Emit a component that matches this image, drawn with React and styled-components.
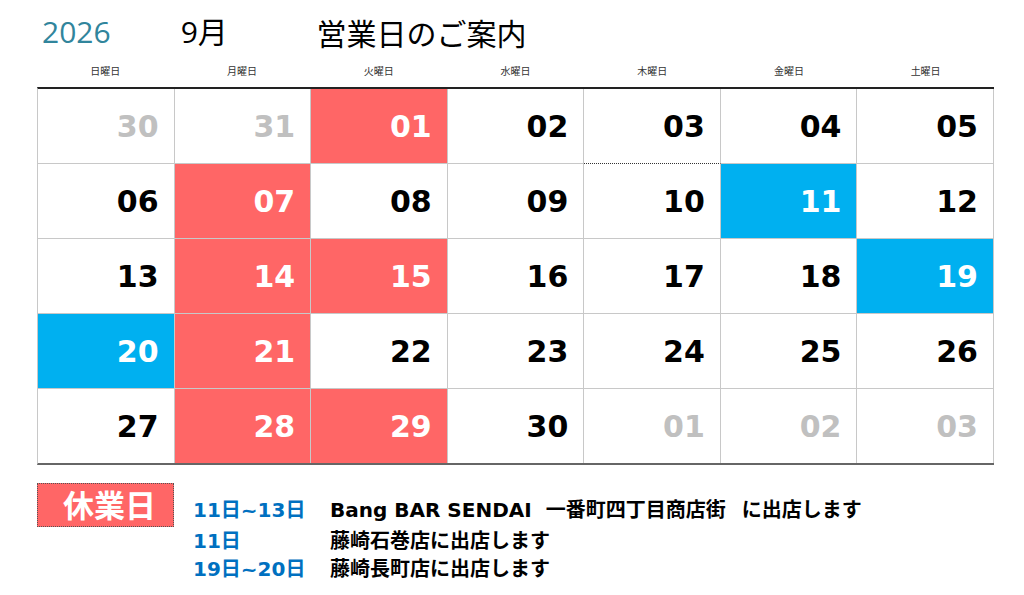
import React from "react";
import styled, { createGlobalStyle } from "styled-components";

const Global = createGlobalStyle`
  html, body { margin: 0; padding: 0; background: #fff; }
  body { font-family: "Noto Sans CJK JP", sans-serif; }
`;

const RED = "#ff6666";
const BLUE = "#00b0f0";

const Page = styled.div`
  width: 957px;
  padding: 10px 0 0 37px;
`;

const Cols = styled.div`
  display: grid;
  grid-template-columns: repeat(7, 1fr);
`;

const TitleRow = styled(Cols)`
  height: 44px;
  align-items: center;
`;

const TitleText = styled.div`
  grid-column: ${(p) => p.$span || "auto"};
  padding-left: ${(p) => p.$pad}px;
  font-family: ${(p) => (p.$latin ? '"Open Sans", ' : "")}"Noto Sans CJK JP", sans-serif;
  font-size: 30px;
  line-height: 1;
  color: ${(p) => p.$color || "#000"};
  white-space: nowrap;
`;

const WeekRow = styled(Cols)`
  height: 33px;
  align-items: center;
`;

const WeekLabel = styled.div`
  text-align: center;
  font-size: 10px;
  color: #333;
  line-height: 1;
`;

const Calendar = styled(Cols)`
  border-top: 2px solid #222;
  border-bottom: 2px solid #666;
  border-left: 1px solid #c8c8c8;
`;

const Cell = styled.div`
  box-sizing: border-box;
  display: flex;
  align-items: center;
  justify-content: flex-end;
  padding: 1px 15px 0 0;
  background: ${(p) => (p.$kind === "red" ? RED : p.$kind === "blue" ? BLUE : "#fff")};
  color: ${(p) => (p.$kind === "red" || p.$kind === "blue" ? "#fff" : p.$muted ? "#c0c0c0" : "#000")};
  border-right: 1px solid #c8c8c8;
  border-bottom: ${(p) => (p.$last ? "none" : p.$dotted ? "1px dotted #333" : "1px solid #c8c8c8")};
  height: ${(p) => (p.$last ? "74px" : "75px")};
  font-family: "DejaVu Sans", sans-serif;
  font-weight: 700;
  font-size: 30px;
  line-height: 1;
`;

const Legend = styled.div`
  display: flex;
  margin-top: 18px;
`;

const HolidayBox = styled.div`
  width: 137px;
  height: 44px;
  box-sizing: border-box;
  background: ${RED};
  border: 1px dotted #555;
  color: #fff;
  font-family: "Noto Sans CJK JP", sans-serif;
  font-weight: 700;
  font-size: 31px;
  line-height: 40px;
  padding-left: 25px;
  white-space: nowrap;
`;

const Lines = styled.div`
  margin: 13px 0 0 19px;
  display: grid;
  grid-template-columns: 137px auto;
  font-family: "DejaVu Sans", "Noto Sans CJK JP", sans-serif;
  font-weight: 700;
  font-size: 20px;
  line-height: 28px;
`;

const DateText = styled.div`
  color: #0070c0;
  white-space: nowrap;
  margin-bottom: ${(p) => (p.$first ? 3 : 0)}px;
`;

const Desc = styled.div`
  color: #000;
  white-space: nowrap;
  margin-bottom: ${(p) => (p.$first ? 3 : 0)}px;
`;

const Gap = styled.span`
  display: inline-block;
  width: ${(p) => p.$w}px;
`;

const weekdays = ["日曜日", "月曜日", "火曜日", "水曜日", "木曜日", "金曜日", "土曜日"];

const days = [
  ["30", "m"], ["31", "m"], ["01", "red"], ["02"], ["03", "dot"], ["04"], ["05"],
  ["06"], ["07", "red"], ["08"], ["09"], ["10"], ["11", "blue"], ["12"],
  ["13"], ["14", "red"], ["15", "red"], ["16"], ["17"], ["18"], ["19", "blue"],
  ["20", "blue"], ["21", "red"], ["22"], ["23"], ["24"], ["25"], ["26"],
  ["27"], ["28", "red"], ["29", "red"], ["30"], ["01", "m"], ["02", "m"], ["03", "m"],
];

export default function App() {
  return (
    <>
      <Global />
      <Page>
        <TitleRow>
          <TitleText $pad={5} $latin $color="#31859c">2026</TitleText>
          <TitleText $pad={7} $latin>9月</TitleText>
          <TitleText $pad={6} $span="3 / 8">営業日のご案内</TitleText>
        </TitleRow>
        <WeekRow>
          {weekdays.map((w) => (
            <WeekLabel key={w}>{w}</WeekLabel>
          ))}
        </WeekRow>
        <Calendar>
          {days.map(([d, k], i) => (
            <Cell
              key={i}
              $kind={k === "red" || k === "blue" ? k : undefined}
              $muted={k === "m"}
              $dotted={k === "dot"}
              $last={i >= 28}
            >
              {d}
            </Cell>
          ))}
        </Calendar>
        <Legend>
          <HolidayBox>休業日</HolidayBox>
          <Lines>
            <DateText $first>11日~13日</DateText>
            <Desc $first>
              Bang BAR SENDAI<Gap $w={14} />一番町四丁目商店街<Gap $w={16} />に出店します
            </Desc>
            <DateText>11日</DateText>
            <Desc>藤崎石巻店に出店します</Desc>
            <DateText>19日~20日</DateText>
            <Desc>藤崎長町店に出店します</Desc>
          </Lines>
        </Legend>
      </Page>
    </>
  );
}
